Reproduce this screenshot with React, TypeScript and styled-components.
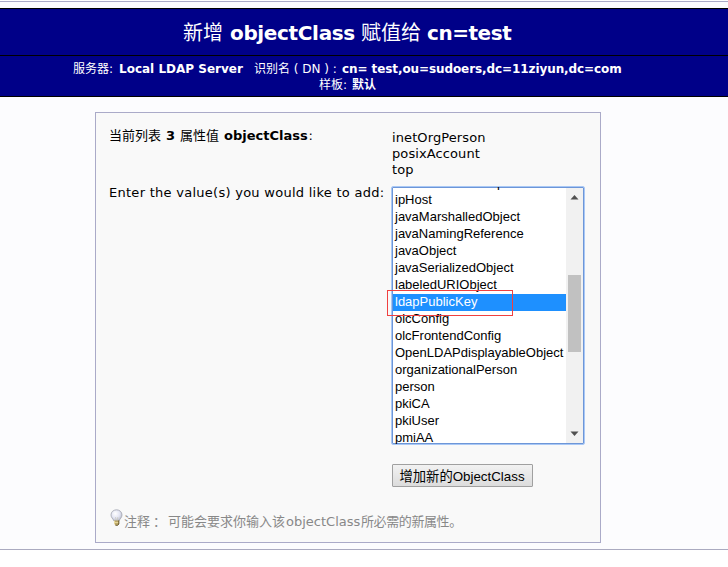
import React from 'react';
import styled, { createGlobalStyle } from 'styled-components';

const verdana = `"DejaVu Sans", "Noto Sans CJK SC", sans-serif`;
const arial = `"Liberation Sans", "Noto Sans CJK SC", sans-serif`;

const Global = createGlobalStyle`
  *, *::before, *::after { box-sizing: border-box; }
  body { margin: 0; background: #fff; overflow: hidden; }
`;

const Page = styled.div`
  width: 728px;
  height: 567px;
  padding-top: 1px;
  background: #fff;
  font: 13px/16px ${verdana};
  color: #000;
  overflow: hidden;
`;

const Main = styled.main`
  height: 549px;
  border-top: 1px solid #aaaac8;
  border-bottom: 1px solid #aaaac0;
  background: #fcfcfe;
  padding-top: 6px;
`;

const Header = styled.header`
  height: 89px;
  border: solid #000;
  border-width: 1px 0;
  background: #000088;
  color: #fff;
`;

const Title = styled.h1`
  display: flex;
  height: 47px;
  margin: 0;
  padding-left: 183px;
  border-bottom: 1px solid #000;
  font-size: 20px;
  line-height: 49px;
  font-weight: 400;
`;

const SubLine = styled.div<{ $left: number }>`
  display: flex;
  height: 16px;
  padding-left: ${p => p.$left}px;
  font-size: 12px;
  line-height: 16px;
`;

const SubHeader = styled.div`
  padding-top: 5px;
`;

const Run = styled.span<{ $w: number; $ls?: number; $bold?: boolean }>`
  flex: none;
  width: ${p => p.$w}px;
  letter-spacing: ${p => p.$ls ?? 0}px;
  font-weight: ${p => (p.$bold ? 700 : 400)};
  white-space: pre;
`;

const Panel = styled.section`
  width: 506px;
  height: 431px;
  margin: 15px 0 0 95px;
  padding: 15px 0 0 13px;
  border: 1px solid #aaaac8;
  background: #f9f9f9;
`;

const Row = styled.div<{ $h: number }>`
  display: grid;
  grid-template-columns: 283px 1fr;
  height: ${p => p.$h}px;
`;

const Label = styled.div`
  display: flex;
`;

const Values = styled.div`
  padding-top: 2px;
  letter-spacing: 0.1px;
`;

const ListWrap = styled.div`
  position: relative;
  width: 194px;
  height: 259px;
  margin: 1px 0 0 -1px;
`;

const ListBox = styled.div`
  display: flex;
  width: 194px;
  height: 259px;
  border: 1px solid #a9c8f5;
  border-radius: 2px;
  box-shadow: inset 0 0 0 1px #6d96d8;
  padding: 1px;
  background: #fff;
  overflow: hidden;
`;

const Options = styled.ul`
  width: 173px;
  margin: -13px 0 0;
  padding: 0;
  list-style: none;
  font: 13px/15px ${arial};
`;

const Option = styled.li<{ $on?: boolean }>`
  height: 17px;
  padding-left: 2px;
  white-space: nowrap;
  color: ${p => (p.$on ? '#fff' : '#000')};
  background: ${p => (p.$on ? '#1e90ff' : 'transparent')};
`;

const Scrollbar = styled.div`
  display: flex;
  flex-direction: column;
  align-items: center;
  width: 17px;
  background: #f1f1f1;
`;

const Thumb = styled.div`
  width: 13px;
  height: 77px;
  margin: 75px 0 77px;
  background: #c1c1c1;
`;

const Marker = styled.div`
  position: absolute;
  left: -4px;
  top: 104px;
  width: 126px;
  height: 26px;
  border: 1px solid #f04040;
`;

const AddButton = styled.button`
  display: block;
  width: 141px;
  height: 23px;
  margin: 19px 0 0 283px;
  padding: 2px 1px 0 0;
  border: 1px solid #a0a0a0;
  border-radius: 1px;
  background: linear-gradient(#f2f2f2, #dcdcdc);
  color: #000;
  font: 13.33px/19px ${arial};
  white-space: nowrap;
`;

const Note = styled.div`
  display: flex;
  height: 20px;
  margin: 22px 0 0 -1px;
  color: #888;
  line-height: 25px;
`;

const Bulb = () => (
  <svg width="16" height="18" viewBox="-0.5 0.5 16 18">
    <defs>
      <radialGradient id="glass" cx="40%" cy="35%" r="65%">
        <stop offset="0" stopColor="#fff" />
        <stop offset="0.6" stopColor="#e3e5f3" />
        <stop offset="1" stopColor="#b9bccb" />
      </radialGradient>
    </defs>
    <path d="M8 1.300c-3.100 0-5.500 2.200-5.500 5.100 0 2.700 2.200 3.900 2.900 6h5.200c.7-2.100 2.900-3.300 2.900-6C13.500 3.500 11.100 1.300 8 1.300z" fill="url(#glass)" stroke="#a2a4ae" strokeWidth=".8" />
    <path d="M7 8.500l.6 3.500M9.300 8.500L8.700 12" stroke="#c8c4b4" strokeWidth=".6" />
    <path d="M5.700 12h4.900v3.300l-1.300 1.500H7l-1.300-1.500z" fill="#bda866" />
    <path d="M6 12.200v3.200M6 14h4.500" stroke="#eee0a5" strokeWidth=".8" />
    <path d="M10.300 12v3.500L9.200 16.800H7" stroke="#5b4d27" strokeWidth=".9" fill="none" />
  </svg>
);

const Arrow = ({ d }: { d: string }) => (
  <svg width="15" height="12" viewBox="0 0 15 12">
    <path d={d} fill="#505050" />
  </svg>
);

const options = [
  'inetLocalMailRecipient', 'ipHost', 'javaMarshalledObject',
  'javaNamingReference', 'javaObject', 'javaSerializedObject',
  'labeledURIObject', 'ldapPublicKey', 'olcConfig', 'olcFrontendConfig',
  'OpenLDAPdisplayableObject', 'organizationalPerson', 'person', 'pkiCA',
  'pkiUser', 'pmiAA',
];

export default function App() {
  return (
    <Page>
      <Global />
      <Main>
        <Header>
          <Title>
            <Run $w={47}>新增</Run>
            <Run $w={131} $bold $ls={-0.35}>objectClass</Run>
            <Run $w={66}>赋值给</Run>
            <Run $w={100} $bold $ls={-0.45}>cn=test</Run>
          </Title>
          <SubHeader>
            <SubLine $left={73}>
              <Run $w={46}>服务器:</Run>
              <Run $w={135} $bold>Local LDAP Server</Run>
              <Run $w={88}>识别名 ( DN ) :</Run>
              <Run $w={290} $bold $ls={-0.09}>cn= test,ou=sudoers,dc=11ziyun,dc=com</Run>
            </SubLine>
            <SubLine $left={319}>
              <Run $w={33}>样板:</Run>
              <Run $w={30} $bold>默认</Run>
            </SubLine>
          </SubHeader>
        </Header>
        <Panel>
          <Row $h={57}>
            <Label>
              <Run $w={57}>当前列表</Run>
              <Run $w={14} $bold>3</Run>
              <Run $w={44}>属性值</Run>
              <Run $w={84.5} $bold>objectClass</Run>
              <Run $w={6}>:</Run>
            </Label>
            <Values>
              <div>inetOrgPerson</div>
              <div>posixAccount</div>
              <div>top</div>
            </Values>
          </Row>
          <Row $h={260}>
            <Label><Run $w={278} $ls={0.27}>Enter the value(s) you would like to add:</Run></Label>
            <ListWrap>
              <ListBox>
                <Options>
                  {options.map(o => <Option key={o} $on={o === 'ldapPublicKey'}>{o}</Option>)}
                </Options>
                <Scrollbar>
                  <Arrow d="M3.500 11.500L7.500 7l4 4.500z" />
                  <Thumb />
                  <Arrow d="M3.500 2.500h8l-4 4.500z" />
                </Scrollbar>
              </ListBox>
              <Marker />
            </ListWrap>
          </Row>
          <AddButton>增加新的ObjectClass</AddButton>
          <Note>
            <Bulb />
            <Run $w={29}>注释</Run>
            <Run $w={15}>：</Run>
            <Run $w={118}>可能会要求你输入该</Run>
            <Run $w={75}>objectClass</Run>
            <Run $w={105} $ls={-0.4}>所必需的新属性。</Run>
          </Note>
        </Panel>
      </Main>
    </Page>
  );
}
